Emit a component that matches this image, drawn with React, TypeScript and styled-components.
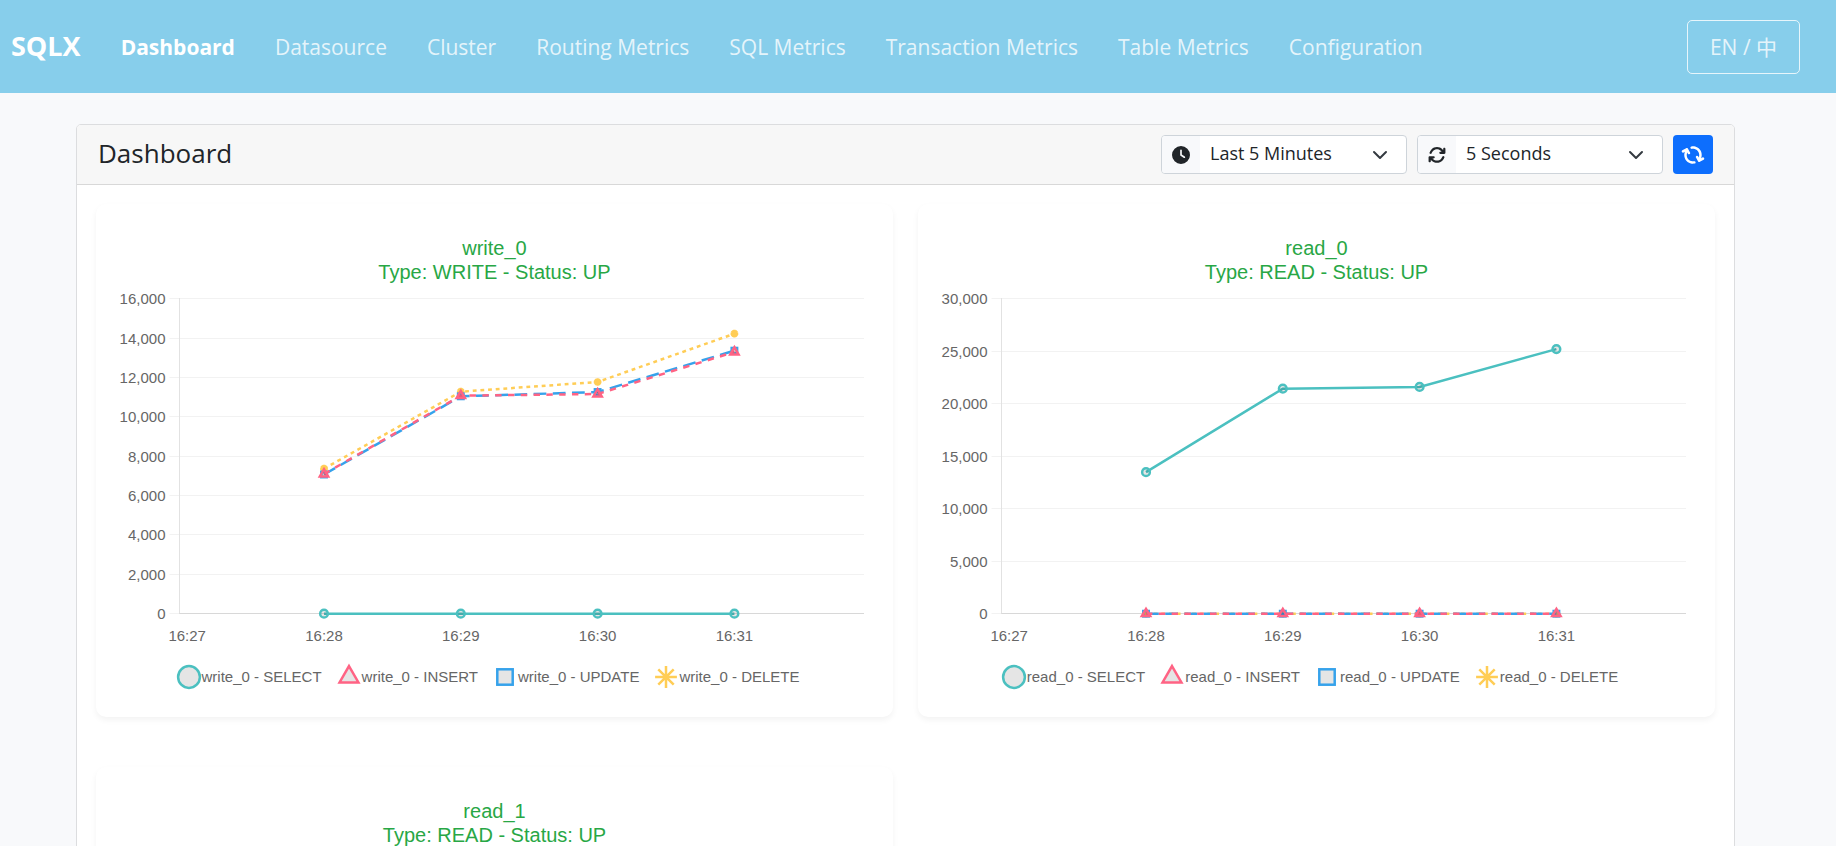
import React from "react";
import styled, { createGlobalStyle } from "styled-components";
import { FaClock, FaArrowsRotate } from "react-icons/fa6";

const uiFont = `"Segoe UI", "Open Sans", "Noto Sans", "Noto Sans CJK SC", sans-serif`;
const chartFont = `"Liberation Sans", Arial, sans-serif`;

const GlobalStyle = createGlobalStyle`
  *, *::before, *::after { box-sizing: border-box; }
  body {
    margin: 0;
    background: #f8f9fb;
    color: #212529;
    font-family: ${uiFont};
    font-size: 18px;
  }
`;

const Navbar = styled.header`
  display: flex;
  align-items: center;
  min-height: 93px;
  padding: 0 36px 0 11px;
  background: #87ceeb;
`;

const Brand = styled.a`
  margin-right: 40px;
  padding-bottom: 2px;
  color: #fff;
  font-size: 27px;
  font-weight: 700;
  line-height: 32px;
  text-decoration: none;
`;

const NavLinks = styled.nav`
  display: flex;
  flex: 1;
  gap: 40px;
`;

const NavLink = styled.a<{ $active?: boolean }>`
  color: ${(p) => (p.$active ? "#fff" : "rgba(255, 255, 255, 0.8)")};
  font-size: 21px;
  font-weight: ${(p) => (p.$active ? 700 : 400)};
  line-height: 32px;
  text-decoration: none;
  white-space: nowrap;
`;

const LanguageButton = styled.button`
  min-width: 113px;
  height: 54px;
  padding: 0 20px 2px;
  border: 1px solid rgba(255, 255, 255, 0.8);
  border-radius: 5px;
  background: transparent;
  color: rgba(255, 255, 255, 0.8);
  font-family: inherit;
  font-size: 21px;
  white-space: nowrap;
`;

const Page = styled.main`
  padding: 31px 101px 31px 76px;
`;

const Panel = styled.section`
  border: 1px solid #dcdddf;
  border-radius: 5px;
  background: #fff;
`;

const PanelHeader = styled.div`
  display: flex;
  align-items: center;
  justify-content: space-between;
  min-height: 60px;
  padding: 0 21px;
  border-bottom: 1px solid #d8d8d8;
  border-radius: 4px 4px 0 0;
  background: #f7f7f7;
`;

const PanelTitle = styled.h1`
  margin: 0;
  padding-bottom: 4px;
  font-size: 26px;
  font-weight: 400;
  line-height: 32px;
`;

const Toolbar = styled.div`
  display: flex;
  gap: 10px;
`;

const SelectGroup = styled.label`
  position: relative;
  display: flex;
  width: 246px;
  height: 39px;
  overflow: hidden;
  border: 1px solid #ced4da;
  border-radius: 4px;
  background: #fff;
`;

const SelectIcon = styled.span`
  display: flex;
  align-items: center;
  justify-content: center;
  width: 38px;
  background: #f8f9fb;
  font-size: 18px;
`;

const Select = styled.select`
  flex: 1;
  padding: 0 40px 3px 10px;
  border: 0;
  appearance: none;
  background: transparent;
  color: #212529;
  font-family: inherit;
  font-size: 18px;
`;

const Chevron = styled.svg`
  position: absolute;
  top: 11px;
  right: 18px;
  width: 16px;
  height: 16px;
  pointer-events: none;
`;

const RefreshButton = styled.button`
  display: flex;
  align-items: center;
  justify-content: center;
  width: 40px;
  height: 39px;
  padding: 0;
  border: 0;
  border-radius: 4px;
  background: #0d6efd;
  color: #fff;
  font-size: 20px;

  svg {
    transform: rotate(60deg);
  }
`;

const ChartGrid = styled.div`
  display: grid;
  grid-template-columns: repeat(2, minmax(0, 1fr));
  gap: 50px 25px;
  padding: 19px 19px 50px;
`;

const ChartCard = styled.article`
  padding: 32px 0 27px;
  border-radius: 10px;
  background: #fff;
  box-shadow: 0 3px 6px rgba(0, 0, 0, 0.05);
  font-family: ${chartFont};
`;

const ChartTitle = styled.h2`
  margin: 0;
  color: #28a745;
  font-size: 20px;
  font-weight: 400;
  line-height: 24px;
  text-align: center;
`;

const Plot = styled.svg`
  display: block;
  width: 100%;
  height: auto;

  text {
    fill: #666;
    font-family: ${chartFont};
    font-size: 15px;
  }
`;

const Legend = styled.ul`
  display: flex;
  justify-content: center;
  margin: 10px 0 0;
  padding: 0;
  list-style: none;
`;

const LegendItem = styled.li`
  display: flex;
  align-items: center;
  margin-right: 14px;
  color: #666;
  font-size: 15px;
  line-height: 24px;
  white-space: nowrap;

  svg {
    width: 26px;
    height: 26px;
    overflow: visible;
  }
`;

type Shape = "circle" | "triangle" | "rect" | "star";
type Operation = "SELECT" | "INSERT" | "UPDATE" | "DELETE";

interface ChartData {
  name: string;
  type: string;
  max: number;
  step: number;
  values: Record<Operation, number[]>;
}

const operations: { op: Operation; color: string; shape: Shape; dash?: string; radius: number }[] = [
  { op: "SELECT", color: "#4bc0c0", shape: "circle", radius: 3.84 },
  { op: "INSERT", color: "#ff6384", shape: "triangle", dash: "6.4 6.4", radius: 4.8 },
  { op: "UPDATE", color: "#36a2eb", shape: "rect", dash: "12.8 6.4", radius: 3.84 },
  { op: "DELETE", color: "#ffcd56", shape: "star", dash: "3.84 3.84", radius: 3.84 },
];

const charts: ChartData[] = [
  {
    name: "write_0",
    type: "WRITE",
    max: 16000,
    step: 2000,
    values: {
      SELECT: [0, 0, 0, 0],
      INSERT: [7096, 11073, 11159, 13293],
      UPDATE: [7070, 11042, 11260, 13360],
      DELETE: [7365, 11276, 11769, 14222],
    },
  },
  {
    name: "read_0",
    type: "READ",
    max: 30000,
    step: 5000,
    values: {
      SELECT: [13480, 21430, 21600, 25200],
      INSERT: [0, 0, 0, 0],
      UPDATE: [0, 0, 0, 0],
      DELETE: [0, 0, 0, 0],
    },
  },
  {
    name: "read_1",
    type: "READ",
    max: 30000,
    step: 5000,
    values: {
      SELECT: [13510, 21400, 21620, 25180],
      INSERT: [0, 0, 0, 0],
      UPDATE: [0, 0, 0, 0],
      DELETE: [0, 0, 0, 0],
    },
  },
];

const times = ["16:27", "16:28", "16:29", "16:30", "16:31"];
const plot = { left: 83.5, right: 768, top: 14.7, bottom: 329.7, firstX: 91.2, stepX: 136.8 };

function Marker({ shape, x, y, r, color }: { shape: Shape; x: number; y: number; r: number; color: string }) {
  const paint = { stroke: color, strokeWidth: 2.5, fill: "rgba(0,0,0,0.1)" };
  if (shape === "circle") return <circle cx={x} cy={y} r={r} {...paint} />;
  if (shape === "triangle") {
    const w = r * 0.866;
    return <path d={`M${x} ${y - r}L${x + w} ${y + r / 2}H${x - w}Z`} {...paint} />;
  }
  if (shape === "rect") {
    const h = r * 0.707;
    return <rect x={x - h} y={y - h} width={h * 2} height={h * 2} {...paint} />;
  }
  const d = r * 0.707;
  return (
    <path
      d={`M${x - r} ${y}H${x + r}M${x} ${y - r}V${y + r}M${x - d} ${y - d}L${x + d} ${y + d}M${x + d} ${y - d}L${x - d} ${y + d}`}
      {...paint}
    />
  );
}

function LineChart({ data }: { data: ChartData }) {
  const yOf = (v: number) => plot.bottom - (v / data.max) * (plot.bottom - plot.top);
  const xOf = (i: number) => plot.firstX + i * plot.stepX;
  const crisp = (n: number) => Math.floor(n) + 0.5;
  const ticks = Array.from({ length: data.max / data.step + 1 }, (_, i) => i * data.step);

  return (
    <ChartCard>
      <ChartTitle>
        {data.name}
        <br />
        Type: {data.type} - Status: UP
      </ChartTitle>
      <Plot viewBox="0 0 797 370" role="img" aria-label={`${data.name} operations per minute`}>
        {ticks.map((t) => {
          const y = crisp(yOf(t));
          return (
            <g key={t}>
              <line x1={plot.left - 10} x2={plot.right} y1={y} y2={y} stroke="#f2f2f2" />
              <text x={plot.left - 14} y={y + 5} textAnchor="end">
                {t.toLocaleString("en-US")}
              </text>
            </g>
          );
        })}
        <line x1={plot.left} x2={plot.left} y1={14} y2={330} stroke="#e2e2e2" />
        <line x1={plot.left} x2={plot.right} y1={329.5} y2={329.5} stroke="#d8d8d8" />
        {times.map((t, i) => (
          <text key={t} x={xOf(i)} y={357} textAnchor="middle">
            {t}
          </text>
        ))}
        {[...operations].reverse().map(({ op, color, shape, dash, radius }) => (
          <g key={op}>
            <polyline
              points={data.values[op].map((v, i) => `${xOf(i + 1)},${yOf(v)}`).join(" ")}
              fill="none"
              stroke={color}
              strokeWidth={2.5}
              strokeDasharray={dash}
            />
            {data.values[op].map((v, i) => (
              <Marker key={i} shape={shape} x={xOf(i + 1)} y={yOf(v)} r={radius} color={color} />
            ))}
          </g>
        ))}
      </Plot>
      <Legend>
        {operations.map(({ op, color, shape }) => (
          <LegendItem key={op}>
            <svg viewBox="0 0 26 26" aria-hidden="true">
              <Marker shape={shape} x={13} y={13} r={10.9} color={color} />
            </svg>
            {data.name} - {op}
          </LegendItem>
        ))}
      </Legend>
    </ChartCard>
  );
}

function IconSelect({ label, icon, options }: { label: string; icon: React.ReactNode; options: string[] }) {
  return (
    <SelectGroup>
      <SelectIcon>{icon}</SelectIcon>
      <Select aria-label={label}>
        {options.map((o) => (
          <option key={o}>{o}</option>
        ))}
      </Select>
      <Chevron viewBox="0 0 16 16" aria-hidden="true">
        <path d="m2 5 6 6 6-6" fill="none" stroke="#343a40" strokeWidth="2" strokeLinecap="round" strokeLinejoin="round" />
      </Chevron>
    </SelectGroup>
  );
}

const links = [
  "Dashboard",
  "Datasource",
  "Cluster",
  "Routing Metrics",
  "SQL Metrics",
  "Transaction Metrics",
  "Table Metrics",
  "Configuration",
];

export default function App() {
  return (
    <>
      <GlobalStyle />
      <Navbar>
        <Brand href="#">SQLX</Brand>
        <NavLinks>
          {links.map((link, i) => (
            <NavLink key={link} href="#" $active={i === 0}>
              {link}
            </NavLink>
          ))}
        </NavLinks>
        <LanguageButton type="button">EN / 中</LanguageButton>
      </Navbar>
      <Page>
        <Panel>
          <PanelHeader>
            <PanelTitle>Dashboard</PanelTitle>
            <Toolbar>
              <IconSelect label="Time range" icon={<FaClock />} options={["Last 5 Minutes", "Last 15 Minutes", "Last 1 Hour"]} />
              <IconSelect label="Refresh interval" icon={<FaArrowsRotate />} options={["5 Seconds", "10 Seconds", "30 Seconds"]} />
              <RefreshButton type="button" aria-label="Refresh">
                <FaArrowsRotate />
              </RefreshButton>
            </Toolbar>
          </PanelHeader>
          <ChartGrid>
            {charts.map((c) => (
              <LineChart key={c.name} data={c} />
            ))}
          </ChartGrid>
        </Panel>
      </Page>
    </>
  );
}
